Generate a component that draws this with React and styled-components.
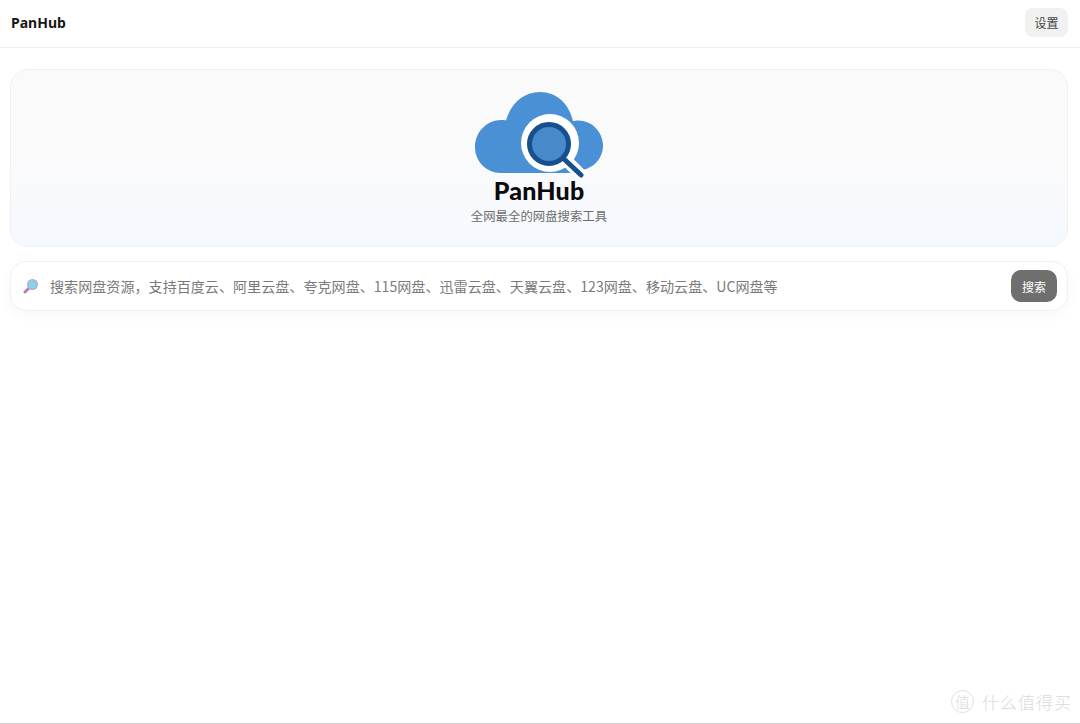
import styled, { createGlobalStyle } from "styled-components"

const GlobalStyle = createGlobalStyle`
  html, body {
    margin: 0;
    padding: 0;
    background: #fff;
  }
  body {
    font-family: "Inter", "Noto Sans CJK SC", sans-serif;
  }
`

const Page = styled.div`
  position: relative;
  height: 723px;
  border-bottom: solid 1px #d4d4d4;
  overflow: hidden;
`

const Header = styled.header`
  display: flex;
  align-items: center;
  justify-content: space-between;
  height: 45px;
  padding: 0 12px 2px 11px;
  border-bottom: solid 1px #f0f0f0;
`

const Brand = styled.div`
  font-family: "Noto Sans", sans-serif;
  font-size: 14px;
  font-weight: 700;
  color: #171717;
`

const SettingsButton = styled.button`
  width: 43px;
  height: 29px;
  padding: 0;
  border: none;
  border-radius: 8px;
  background: #f1f1f1;
  color: #444;
  font-family: "Noto Sans CJK SC", sans-serif;
  font-size: 12px;
`

const Main = styled.main`
  display: flex;
  flex-direction: column;
  gap: 14px;
  padding: 21px 12px 0 10px;
`

const Hero = styled.section`
  display: flex;
  flex-direction: column;
  align-items: center;
  height: 178px;
  padding-top: 22px;
  box-sizing: border-box;
  border: solid 1px #f0f0f0;
  border-radius: 18px;
  background: linear-gradient(180deg, #fafafa 0%, #fafafb 50%, #f5f9fe 100%);
`

const LogoWrap = styled.div`
  display: flex;
  flex-direction: column;
  align-items: center;
`

const LogoName = styled.div`
  font-family: "Lato", sans-serif;
  font-size: 25px;
  font-weight: 900;
  line-height: 25px;
  letter-spacing: 0.2px;
  color: #0b0b0b;
`

const Tagline = styled.p`
  margin: 4px 0 0;
  font-family: "Noto Sans CJK SC", sans-serif;
  font-size: 12.4px;
  line-height: 18px;
  color: #6d6d6d;
`

const SearchBar = styled.form`
  display: flex;
  align-items: center;
  height: 50px;
  padding: 0 10px 0 12px;
  box-sizing: border-box;
  border: solid 1px #f0f0f0;
  border-radius: 16px;
  background: #fff;
  box-shadow: 0 4px 14px rgba(0, 0, 0, 0.035);
`

const SearchIcon = styled.svg`
  flex: none;
  width: 16px;
  height: 16px;
  margin-right: 11px;
`

const SearchInput = styled.input`
  flex: 1;
  min-width: 0;
  padding: 0;
  border: none;
  outline: none;
  background: transparent;
  font-family: "Noto Sans CJK SC", sans-serif;
  font-size: 14.08px;

  &::placeholder {
    color: #7a7a7a;
    opacity: 1;
  }
`

const SearchButton = styled.button`
  flex: none;
  width: 46px;
  height: 32px;
  padding: 0;
  border: none;
  border-radius: 10px;
  background: #6f6f6f;
  color: #fff;
  font-family: "Noto Sans CJK SC", sans-serif;
  font-size: 12px;
`

const Watermark = styled.div`
  position: absolute;
  right: 8px;
  bottom: 9px;
  display: flex;
  align-items: center;
  gap: 8px;
  color: #dadada;
  font-family: "Noto Sans CJK SC", sans-serif;
  font-size: 17px;
  font-weight: 300;
  letter-spacing: 1px;
`

const WatermarkBadge = styled.span`
  display: flex;
  align-items: center;
  justify-content: center;
  width: 21px;
  height: 21px;
  border: solid 1px #e0e0e0;
  border-radius: 50%;
  font-size: 15px;
  letter-spacing: 0;
`

function CloudLogo() {
  return (
    <svg width="130" height="86" viewBox="0 0 130 86">
      <path
        fill="#4a90d4"
        d="M27 81 C12 81 1 69 1 55 C1 40 13 28 27 28 C29 28 31 28 32 28.5 C37 11 50 0 66 0 C82 0 95 11 99 29 C101 29 102 28.5 104 28.5 C118 28.5 129 40 129 53.5 C129 66 120 76 108 78 L100 81 Z"
      />
      <circle cx="76" cy="51" r="29" fill="#fff" />
      <path d="M90 66 L110 86" stroke="#fff" strokeWidth="12" />
      <circle cx="75" cy="52" r="19.5" fill="#4889c9" stroke="#17508f" strokeWidth="5" />
      <path d="M90 67 L107 83" stroke="#17508f" strokeWidth="5" strokeLinecap="round" />
    </svg>
  )
}

function LensIcon() {
  return (
    <SearchIcon viewBox="0 0 16 16">
      <path d="M6 10 L2 14" stroke="#b57fb5" strokeWidth="3" strokeLinecap="round" />
      <circle cx="9.5" cy="6.5" r="5.5" fill="#c5a3c9" />
      <circle cx="9.5" cy="6.5" r="4.3" fill="#85d4ee" />
    </SearchIcon>
  )
}

export default function App() {
  return (
    <>
      <GlobalStyle />
      <Page>
        <Header>
          <Brand>PanHub</Brand>
          <SettingsButton type="button">设置</SettingsButton>
        </Header>
        <Main>
          <Hero>
            <LogoWrap>
              <CloudLogo />
              <LogoName>PanHub</LogoName>
            </LogoWrap>
            <Tagline>全网最全的网盘搜索工具</Tagline>
          </Hero>
          <SearchBar onSubmit={(e) => e.preventDefault()}>
            <LensIcon />
            <SearchInput placeholder="搜索网盘资源，支持百度云、阿里云盘、夸克网盘、115网盘、迅雷云盘、天翼云盘、123网盘、移动云盘、UC网盘等" />
            <SearchButton type="submit">搜索</SearchButton>
          </SearchBar>
        </Main>
        <Watermark>
          <WatermarkBadge>值</WatermarkBadge>
          什么值得买
        </Watermark>
      </Page>
    </>
  )
}
